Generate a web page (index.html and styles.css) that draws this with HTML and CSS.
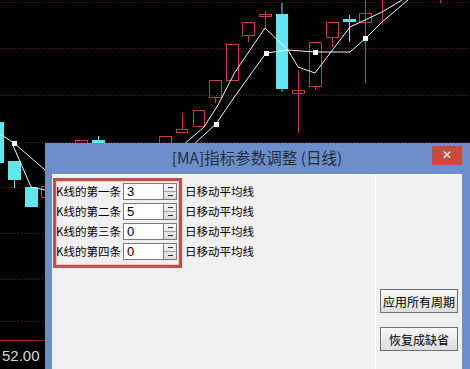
FILE: index.html
```html
<!DOCTYPE html>
<html lang="zh-CN">
  <head>
    <meta charset="UTF-8" />
    <title>[MA]指标参数调整</title>
    <link rel="stylesheet" href="styles.css">
  </head>
  <body>
    <div class="screen">
      <svg class="chart" width="470" height="369" viewBox="0 0 470 369">
        <g class="grid">
          <line x1="0" y1="2.5" x2="470" y2="2.5" />
          <line x1="0" y1="48.5" x2="470" y2="48.5" />
          <line x1="0" y1="95.5" x2="470" y2="95.5" />
          <line x1="0" y1="142.5" x2="470" y2="142.5" />
          <line x1="0" y1="187.5" x2="470" y2="187.5" />
          <line x1="0" y1="233.5" x2="470" y2="233.5" />
          <line x1="0" y1="279.5" x2="470" y2="279.5" />
          <line x1="0" y1="321.5" x2="470" y2="321.5" />
        </g>
        <line x1="0" y1="340.5" x2="45" y2="340.5" stroke="#a02828" />
        <text x="2" y="361" class="price">52.00</text>

        <!-- falling candles -->
        <g class="down">
          <rect x="0" y="122" width="4" height="41" />
          <line x1="14.5" y1="178" x2="14.5" y2="188" />
          <rect x="8" y="161" width="13" height="19" />
          <rect x="25" y="187" width="13" height="20" />
          <line x1="98.5" y1="136" x2="98.5" y2="141" />
          <rect x="92" y="140" width="13" height="5" />
          <line x1="282" y1="3" x2="282" y2="92" />
          <rect x="276" y="14" width="12" height="75" />
          <line x1="349.5" y1="15" x2="349.5" y2="42" />
          <rect x="343" y="19" width="13" height="3" />
        </g>

        <!-- rising candles -->
        <g class="up">
          <rect x="41.5" y="186.5" width="8" height="11" />
          <rect x="75.5" y="140.5" width="12" height="6" />
          <rect x="159.5" y="136.5" width="12" height="8" />
          <line x1="182.5" y1="113" x2="182.5" y2="129" />
          <rect x="176.5" y="129.5" width="11" height="3" />
          <rect x="193.5" y="110.5" width="11" height="16" />
          <line x1="215.5" y1="97" x2="215.5" y2="103" />
          <rect x="209.5" y="80.5" width="12" height="17" />
          <rect x="226.5" y="44.5" width="12" height="36" />
          <line x1="248.5" y1="35" x2="248.5" y2="42" />
          <rect x="242.5" y="22.5" width="12" height="13" />
          <line x1="265.5" y1="11" x2="265.5" y2="28" />
          <rect x="259.5" y="14.5" width="12" height="2" />
          <line x1="298.5" y1="70" x2="298.5" y2="133" />
          <rect x="292.5" y="90.5" width="12" height="3" />
          <line x1="315.5" y1="86" x2="315.5" y2="90" />
          <rect x="309.5" y="42.5" width="12" height="44" />
          <line x1="332.5" y1="37" x2="332.5" y2="47" />
          <rect x="326.5" y="22.5" width="12" height="15" />
          <line x1="365.5" y1="0" x2="365.5" y2="83" />
          <rect x="359.5" y="13.5" width="12" height="9" />
          <line x1="382.5" y1="0" x2="382.5" y2="25" />
          <line x1="440.5" y1="0" x2="440.5" y2="3" />
        </g>

        <!-- moving averages -->
        <g class="ma">
          <polyline points="0,134 14,143 45,170" />
          <polyline points="12,143 31,187 45,190" />
          <polyline points="182,146 204,127 218,105 235,72 265,28 288,50 298,67 315,73 350,27 382,12 402,0" />
          <polyline points="192,146 216,124 235,96 266,53 288,50 315,52 350,52 366,38 382,22 408,0" />
        </g>
        <g class="marker">
          <rect x="12" y="141" width="5" height="5" />
          <rect x="214" y="122" width="5" height="5" />
          <rect x="264" y="51" width="5" height="5" />
          <rect x="313" y="50" width="5" height="5" />
          <rect x="363" y="36" width="5" height="5" />
        </g>
      </svg>

      <div class="dialog">
        <div class="titlebar">
          <span></span>
          <span class="title">[MA]指标参数调整 (日线)</span>
          <button class="close">&#x2715;</button>
        </div>
        <div class="client">
          <div class="params">
            <div class="row">
              <span class="row-label">K线的第一条</span>
              <span class="num">3</span>
              <span class="spin"><i></i><i></i></span>
              <span class="unit">日移动平均线</span>
            </div>
            <div class="row">
              <span class="row-label">K线的第二条</span>
              <span class="num">5</span>
              <span class="spin"><i></i><i></i></span>
              <span class="unit">日移动平均线</span>
            </div>
            <div class="row">
              <span class="row-label">K线的第三条</span>
              <span class="num">0</span>
              <span class="spin"><i></i><i></i></span>
              <span class="unit">日移动平均线</span>
            </div>
            <div class="row">
              <span class="row-label">K线的第四条</span>
              <span class="num">0</span>
              <span class="spin"><i></i><i></i></span>
              <span class="unit">日移动平均线</span>
            </div>
            <div class="highlight"></div>
          </div>
          <div class="actions">
            <button class="btn">应用所有周期</button>
            <button class="btn">恢复成缺省</button>
          </div>
        </div>
      </div>
    </div>
  </body>
</html>
```

FILE: styles.css
```css
body {
  margin: 0;
  padding: 0;
  background-color: #000;
  font-family: "Noto Sans CJK SC", "Liberation Sans", sans-serif;
}

.screen {
  position: relative;
  width: 470px;
  height: 369px;
  overflow: hidden;
  background-color: #000;
}

.chart {
  display: block;
}

.grid line {
  stroke: #7a1c1c;
  stroke-dasharray: 1 2;
}

.price {
  fill: #d8d8d8;
  font-family: "Liberation Sans", sans-serif;
  font-size: 15px;
}

.down rect {
  fill: #5ee8ee;
}

.down line {
  stroke: #5ee8ee;
}

.up rect {
  fill: none;
  stroke: #c83c3c;
}

.up line {
  stroke: #c83c3c;
}

.ma polyline {
  fill: none;
  stroke: #f2f2f2;
  stroke-width: 1;
}

.marker rect {
  fill: #fff;
}

/* dialog */
.dialog {
  position: absolute;
  left: 45px;
  top: 143px;
  right: 0;
  bottom: 0;
  background-color: #6b8fca;
  padding: 0 8px 0 7px;
  display: flex;
  flex-direction: column;
}

.titlebar {
  height: 31px;
  display: grid;
  grid-template-columns: 30px 1fr 30px;
}

.title {
  text-align: center;
  font-size: 15.5px;
  line-height: 29px;
  color: #26303c;
  white-space: nowrap;
}

.close {
  margin-top: 3px;
  height: 19px;
  padding: 0;
  border: none;
  background-color: #c94a3f;
  color: #fff;
  font-size: 12px;
  font-weight: bold;
  line-height: 19px;
  font-family: "DejaVu Sans", sans-serif;
}

.client {
  flex: 1;
  display: flex;
  background-color: #f0f0f0;
  border-top: 1px solid #fbfbfb;
}

.params {
  position: relative;
  width: 323px;
  padding: 6px 0 0 4px;
  box-sizing: border-box;
}

.row {
  display: flex;
  align-items: center;
  height: 20px;
  font-size: 11.5px;
  color: #000;
}

.row-label {
  width: 67px;
  white-space: nowrap;
}

.num {
  width: 40px;
  height: 17px;
  box-sizing: border-box;
  border: 1px solid #7a7a7a;
  border-right: none;
  background-color: #fff;
  padding-left: 3px;
  font-family: "Liberation Sans", sans-serif;
  font-size: 13px;
  line-height: 15px;
}

.spin {
  width: 14px;
  height: 17px;
  box-sizing: border-box;
  border: 1px solid #7a7a7a;
  background: linear-gradient(#f4f4f4, #dcdcdc);
  display: flex;
  flex-direction: column;
}

.spin i {
  flex: 1;
  display: flex;
  align-items: center;
  justify-content: center;
}

.spin i:first-child {
  border-bottom: 1px solid #a8a8a8;
}

.spin i::after {
  content: "";
  width: 5px;
  height: 1px;
  background-color: #333;
}

.unit {
  margin-left: 8px;
  white-space: nowrap;
}

.highlight {
  position: absolute;
  left: 1px;
  top: 3px;
  width: 129px;
  height: 90px;
  box-sizing: border-box;
  border: 3px solid #c0504d;
  box-shadow: inset 0 0 0 1px #f2c4c2;
  pointer-events: none;
}

.actions {
  flex: 1;
  border-left: 1px solid #fff;
  padding: 114px 0 0 4px;
  display: flex;
  flex-direction: column;
  gap: 14px;
}

.btn {
  width: 78px;
  height: 24px;
  padding: 0;
  border: 1px solid #707070;
  background: linear-gradient(#f7f7f7, #dddddd);
  font-family: "Noto Sans CJK SC", sans-serif;
  font-size: 12px;
  color: #000;
}
```
